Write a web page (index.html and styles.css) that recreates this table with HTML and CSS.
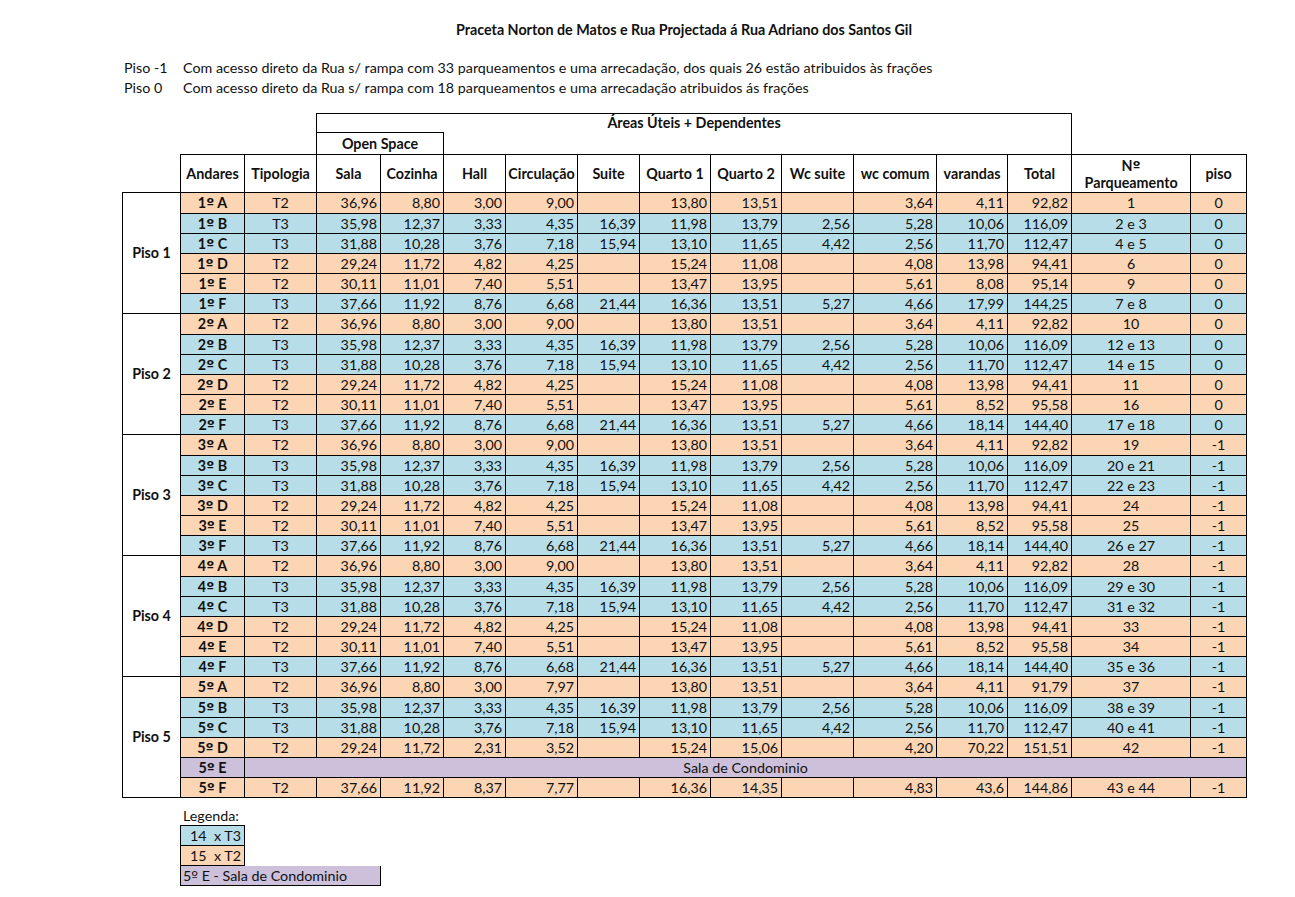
FILE: index.html
```html
<!DOCTYPE html>
<html lang="pt">
<head>
<meta charset="utf-8">
<title>Praceta Norton de Matos</title>
<link rel="stylesheet" href="styles.css">
</head>
<body>
<div class="page">
  <h1 class="title">Praceta Norton de Matos e Rua Projectada á Rua Adriano dos Santos Gil</h1>
  <div class="notes">
    <div class="note"><span class="nk">Piso -1</span><span class="nv">Com acesso direto da Rua s/ rampa com 33 parqueamentos e uma arrecadação, dos quais 26 estão atribuidos às frações</span></div>
    <div class="note"><span class="nk">Piso 0</span><span class="nv">Com acesso direto da Rua s/ rampa com 18 parqueamentos e uma arrecadação atribuidos ás frações</span></div>
  </div>
  <table class="grid">
    <colgroup>
      <col class="c58"><col class="c64"><col class="c72"><col class="c64"><col class="c63"><col class="c62"><col class="c72"><col class="c62"><col class="c71"><col class="c71"><col class="c72"><col class="c83"><col class="c71"><col class="c64"><col class="c119"><col class="c56">
    </colgroup>
    <thead>
      <tr class="h1">
        <th colspan="3" class="blank"></th>
        <th colspan="11" class="areas">Áreas Úteis + Dependentes</th>
        <th colspan="2" class="blank"></th>
      </tr>
      <tr class="h2">
        <th colspan="3" class="blank"></th>
        <th colspan="2" class="os">Open Space</th>
        <th colspan="9" class="osrest"></th>
        <th colspan="2" class="blank"></th>
      </tr>
      <tr class="h3">
        <th class="blank"></th>
        <th class="hd">Andares</th>
        <th class="hd">Tipologia</th>
        <th class="hd">Sala</th>
        <th class="hd">Cozinha</th>
        <th class="hd">Hall</th>
        <th class="hd">Circulação</th>
        <th class="hd">Suite</th>
        <th class="hd">Quarto 1</th>
        <th class="hd">Quarto 2</th>
        <th class="hd">Wc suite</th>
        <th class="hd">wc comum</th>
        <th class="hd">varandas</th>
        <th class="hd">Total</th>
        <th class="hd">N<span class="ord">º</span><br>Parqueamento</th>
        <th class="hd">piso</th>
      </tr>
    </thead>
    <tbody id="body"></tbody>
  </table>
  <div class="legend">
    <div class="lg-title">Legenda:</div>
    <div class="lg lg-t3">14&nbsp; x T3</div>
    <div class="lg lg-t2">15&nbsp; x T2</div>
    <div class="lg lg-c">5<span class="ord">º</span> E - Sala de Condominio</div>
  </div>
</div>
<script src="app.js"></script>
</body>
</html>
```
FILE: app.js
```js
const A = ["T2","36,96","8,80","3,00","9,00","","13,80","13,51","","3,64","4,11","92,82"];
const B = ["T3","35,98","12,37","3,33","4,35","16,39","11,98","13,79","2,56","5,28","10,06","116,09"];
const C = ["T3","31,88","10,28","3,76","7,18","15,94","13,10","11,65","4,42","2,56","11,70","112,47"];
const D = ["T2","29,24","11,72","4,82","4,25","","15,24","11,08","","4,08","13,98","94,41"];
const E = ["T2","30,11","11,01","7,40","5,51","","13,47","13,95","","5,61","8,52","95,58"];
const F = ["T3","37,66","11,92","8,76","6,68","21,44","16,36","13,51","5,27","4,66","18,14","144,40"];
const E1 = ["T2","30,11","11,01","7,40","5,51","","13,47","13,95","","5,61","8,08","95,14"];
const F1 = ["T3","37,66","11,92","8,76","6,68","21,44","16,36","13,51","5,27","4,66","17,99","144,25"];
const A5 = ["T2","36,96","8,80","3,00","7,97","","13,80","13,51","","3,64","4,11","91,79"];
const D5 = ["T2","29,24","11,72","2,31","3,52","","15,24","15,06","","4,20","70,22","151,51"];
const F5 = ["T2","37,66","11,92","8,37","7,77","","16,36","14,35","","4,83","43,6","144,86"];

const groups = [
  {n:1, rows:[[A,"1","0"],[B,"2 e 3","0"],[C,"4 e 5","0"],[D,"6","0"],[E1,"9","0"],[F1,"7 e 8","0"]]},
  {n:2, rows:[[A,"10","0"],[B,"12 e 13","0"],[C,"14 e 15","0"],[D,"11","0"],[E,"16","0"],[F,"17 e 18","0"]]},
  {n:3, rows:[[A,"19","-1"],[B,"20 e 21","-1"],[C,"22 e 23","-1"],[D,"24","-1"],[E,"25","-1"],[F,"26 e 27","-1"]]},
  {n:4, rows:[[A,"28","-1"],[B,"29 e 30","-1"],[C,"31 e 32","-1"],[D,"33","-1"],[E,"34","-1"],[F,"35 e 36","-1"]]},
  {n:5, rows:[[A5,"37","-1"],[B,"38 e 39","-1"],[C,"40 e 41","-1"],[D5,"42","-1"],null,[F5,"43 e 44","-1"]]}
];
const letters = ["A","B","C","D","E","F"];
const tb = document.getElementById("body");
let html = "";
groups.forEach(g => {
  g.rows.forEach((r, i) => {
    const first = i === 0;
    let cls = r === null ? "p" : (r[0][0] === "T3" ? "b" : "o");
    if (first) cls += " gfirst";
    html += '<tr class="' + cls + '">';
    if (first) html += '<td rowspan="6" class="piso">Piso ' + g.n + '</td>';
    html += '<td class="and">' + g.n + '<span class="ord">º</span> ' + letters[i] + '</td>';
    if (r === null) {
      html += '<td colspan="14" class="cond">Sala de Condominio</td>';
    } else {
      html += '<td class="ctr">' + r[0][0] + '</td>';
      for (let k = 1; k < 12; k++) html += '<td class="num">' + r[0][k] + '</td>';
      html += '<td class="ctr">' + r[1] + '</td><td class="ctr">' + r[2] + '</td>';
    }
    html += '</tr>';
  });
});
tb.innerHTML = html;
```
FILE: styles.css
```css
html, body { margin: 0; padding: 0; background: #fff; }
body {
  font-family: Lato, "Liberation Sans", sans-serif;
  font-size: 14.3px;
  color: #111;
}
.page { padding: 0 0 0 122px; width: 1124px; }
.title {
  margin: 0;
  padding-top: 21px;
  height: 18px;
  line-height: 18px;
  font-size: 14.3px;
  font-weight: 700;
  text-align: center;
}
.ord { font-family: "DejaVu Sans", "Liberation Sans", sans-serif; font-size: 1em; line-height: 1; }
.notes { margin-top: 19px; }
.note { display: flex; height: 20px; line-height: 20px; }
.nk { width: 58px; padding-left: 2px; box-sizing: border-box; }
.nv { padding-left: 3px; }
.grid {
  margin-top: 15px;
  border-collapse: collapse;
  table-layout: fixed;
  width: 1124px;
}
.c58 { width: 58px; } .c64 { width: 64px; } .c72 { width: 72px; } .c63 { width: 63px; }
.c62 { width: 62px; } .c71 { width: 71px; } .c83 { width: 83px; } .c119 { width: 119px; } .c56 { width: 56px; }
.grid th, .grid td { padding: 0; border: 1px solid #000; white-space: nowrap; overflow: hidden; }
.grid th { font-weight: 700; text-align: center; }
.grid .blank { border: none; }
.h1 { height: 19px; }
.h2 { height: 22px; }
.h3 { height: 38px; }
.areas { vertical-align: top; border-bottom: none !important; line-height: 18px; }
.os { line-height: 20px; }
.osrest { border-top: none !important; border-left: 1px solid #000; border-bottom: 1px solid #000; }
.hd { line-height: 17px; vertical-align: middle; }
.grid tbody tr { height: 20px; }
.grid tbody tr.gfirst { height: 21px; }
.grid td { line-height: 18px; }
tr.o td { background: #fcd5b4; }
tr.b td { background: #b7dee8; }
tr.p td { background: #ccc0da; }
.grid td.piso { background: #fff; font-weight: 700; text-align: center; vertical-align: middle; }
.and { font-weight: 700; text-align: center; }
.ctr { text-align: center; }
.num { text-align: right; padding-right: 3px !important; }
.cond { text-align: center; }
.legend { margin-left: 58px; margin-top: 8px; }
.lg-title { padding-left: 3px; height: 19px; line-height: 19px; }
.lg { height: 19px; line-height: 19px; border: 1px solid #000; box-sizing: content-box; }
.lg + .lg { border-top: none; }
.lg-t3 { width: 63px; background: #b7dee8; text-indent: 9px; }
.lg-t2 { width: 63px; background: #fcd5b4; text-indent: 9px; }
.lg-c { width: 199px; background: #ccc0da; text-indent: 2px; }
```
